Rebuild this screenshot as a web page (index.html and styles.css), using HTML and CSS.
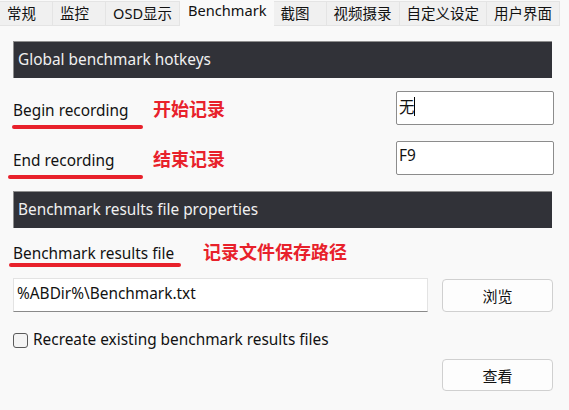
FILE: index.html
```html
<!DOCTYPE html>
<html lang="zh">
<head>
<meta charset="utf-8">
<title>Benchmark</title>
<link rel="stylesheet" href="styles.css">
</head>
<body>
<nav class="tabs">
  <div class="tab"><span class="cjk">常规</span></div>
  <div class="tab"><span class="cjk">监控</span></div>
  <div class="tab">OSD<span class="cjk">显示</span></div>
  <div class="tab active">Benchmark</div>
  <div class="tab"><span class="cjk">截图</span></div>
  <div class="tab"><span class="cjk">视频摄录</span></div>
  <div class="tab"><span class="cjk">自定义设定</span></div>
  <div class="tab"><span class="cjk">用户界面</span></div>
</nav>
<main class="panel">
  <div class="section-bar">Global benchmark hotkeys</div>

  <div class="hotkey-row first">
    <div class="label-col">
      <div class="label-line"><span class="label w-hot">Begin recording</span><span class="note">开始记录</span></div>
      <div class="mark mark-begin"></div>
    </div>
    <div class="field hotkey"><span class="cjk">无</span><span class="caret"></span></div>
  </div>

  <div class="hotkey-row second">
    <div class="label-col">
      <div class="label-line"><span class="label w-hot">End recording</span><span class="note">结束记录</span></div>
      <div class="mark mark-end"></div>
    </div>
    <div class="field hotkey"><span>F9</span></div>
  </div>

  <div class="section-bar">Benchmark results file properties</div>

  <div class="file-label">
    <div class="label-line"><span class="label w-file">Benchmark results file</span><span class="note">记录文件保存路径</span></div>
    <div class="mark mark-file"></div>
  </div>

  <div class="file-row">
    <div class="field path">%ABDir%\Benchmark.txt</div>
    <button class="btn">浏览</button>
  </div>

  <label class="check-row">
    <span class="checkbox"></span>
    <span class="check-text">Recreate existing benchmark results files</span>
  </label>

  <div class="view-row">
    <button class="btn view">查看</button>
  </div>
</main>
</body>
</html>
```

FILE: styles.css
```css
* { box-sizing: border-box; }

html, body {
  margin: 0;
  padding: 0;
  background: #f9f9f9;
  font-family: "Noto Sans", "Noto Sans CJK SC", sans-serif;
  font-size: 15.4px;
  color: #111;
}

.cjk {
  font-family: "Noto Sans CJK SC", sans-serif;
  font-size: 14.5px;
}

.tabs {
  display: flex;
  height: 26px;
  align-items: flex-end;
}

.tab {
  height: 25px;
  min-width: 53px;
  padding: 0 7px;
  background: #f0f0f0;
  border: 1px solid #e4e4e4;
  border-left: none;
  font-size: 14.6px;
  line-height: 22px;
  white-space: nowrap;
}

.tab.active {
  height: 26px;
  background: #f9f9f9;
  border: none;
  line-height: 20px;
  padding: 0 7px 0 8px;
}

.panel {
  padding: 15px 16px 0 13px;
}

.section-bar {
  height: 37px;
  margin-right: 1px;
  background: #313238;
  border-top: 1px solid #8e8e8e;
  border-left: 1px solid #8e8e8e;
  color: #f0f0f0;
  padding-left: 4px;
  line-height: 35px;
}

.hotkey-row {
  display: flex;
  justify-content: space-between;
  height: 34px;
}

.hotkey-row.first { margin-top: 13px; }
.hotkey-row.second { margin-top: 16px; margin-bottom: 16px; }

.label-col {
  padding-top: 7px;
  height: 34px;
}

.label-line {
  display: flex;
  align-items: baseline;
  height: 20px;
  line-height: 20px;
}

.label { display: inline-block; }
.w-hot { width: 140px; }
.w-file { width: 190px; }

.note {
  color: #e8212b;
  font-family: "Noto Sans CJK SC", sans-serif;
  font-weight: 700;
  font-size: 18px;
  line-height: 20px;
}

.mark {
  height: 4px;
  border-radius: 2px;
  background: #e8212b;
  margin-top: 7px;
}
.mark-begin { width: 131px; margin-left: -1px; }
.mark-end { width: 135px; margin-left: -5px; }
.mark-file { width: 172px; margin-left: -4px; margin-top: 2px; }

.field {
  background: #fff;
  line-height: 20px;
  white-space: nowrap;
}

.hotkey {
  width: 158px;
  height: 34px;
  border: 1px solid #8c8c8c;
  border-radius: 2px;
  padding: 4px 2px;
  display: flex;
  align-items: flex-start;
  margin-right: -1px;
}

.hotkey .cjk { font-size: 15.4px; }

.caret {
  display: inline-block;
  width: 1px;
  height: 19px;
  background: #000;
  margin-top: 1px;
}

.file-label {
  margin-top: 13px;
}

.file-row {
  display: flex;
  align-items: flex-start;
  gap: 14px;
  margin-top: 11px;
}

.path {
  width: 415px;
  height: 34px;
  border: 1px solid #e3e3e3;
  border-bottom-color: #8a8a8a;
  padding: 5px 3px;
}

.btn {
  width: 111px;
  height: 33px;
  margin-top: 1px;
  background: #fdfdfd;
  border: 1px solid #d0d0d0;
  border-radius: 4px;
  font-family: "Noto Sans CJK SC", sans-serif;
  font-size: 15px;
  color: #111;
  padding: 0;
}

.check-row {
  display: flex;
  align-items: flex-start;
  gap: 5px;
  margin-top: 18px;
  height: 20px;
  line-height: 20px;
}

.checkbox {
  width: 15px;
  height: 15px;
  margin-top: 3px;
  border: 1px solid #5a5a5a;
  border-radius: 3px;
  background: #f4f4f4;
}

.view-row {
  display: flex;
  justify-content: flex-end;
  margin-top: 8px;
}

.btn.view {
  height: 32px;
}
```
